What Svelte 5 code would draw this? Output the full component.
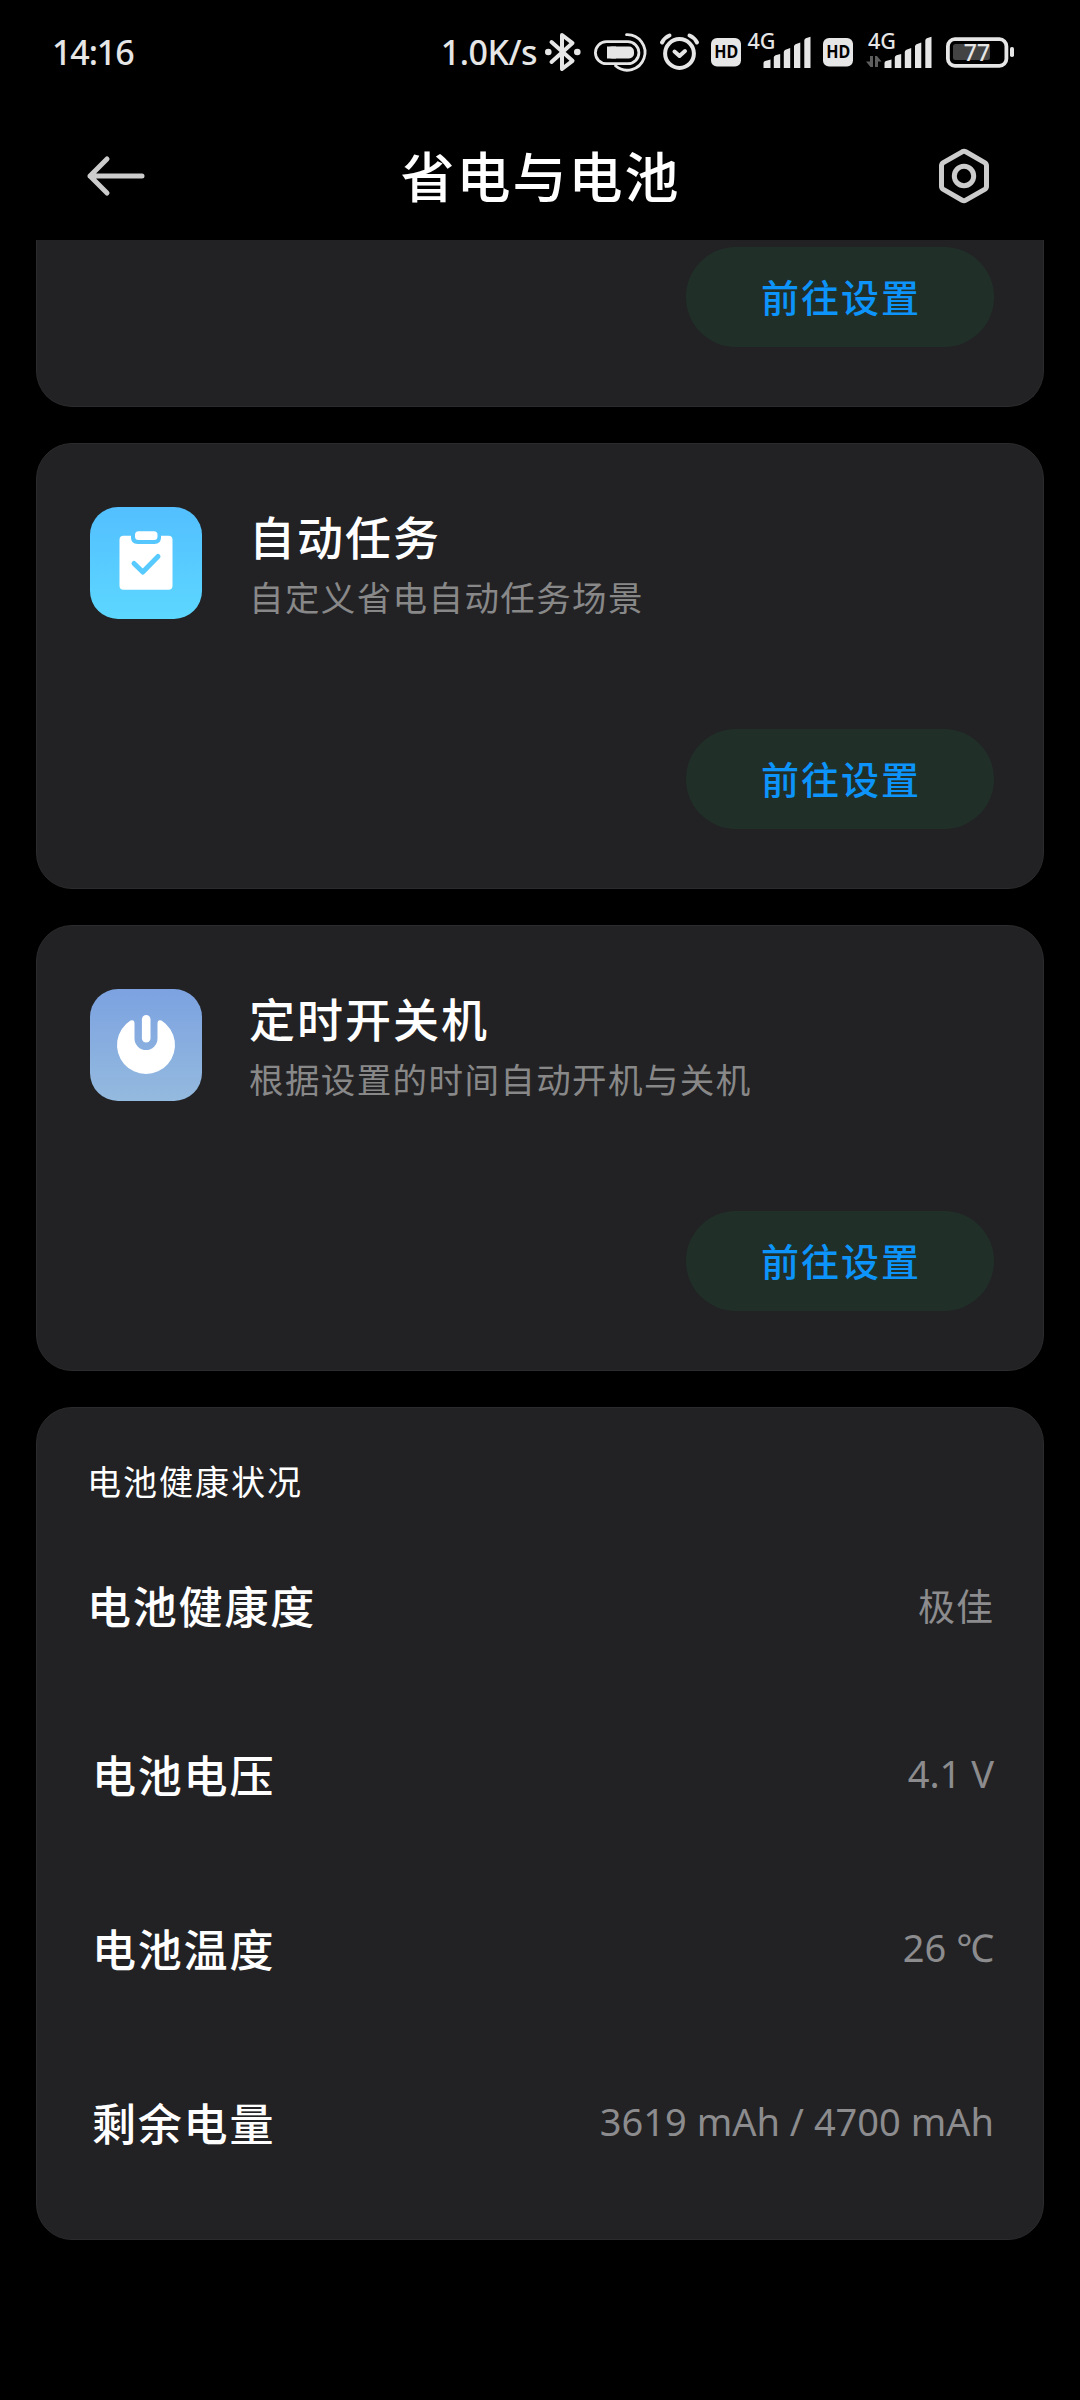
<script lang="ts">
	type Feature = {
		key: "task" | "power";
		title: string;
		note: string;
	};

	type Stat = {
		label: string;
		value: string;
	};

	const time = "14:16";
	const netSpeed = "1.0K/s";
	const batteryLevel = 77;
	const actionLabel = "前往设置";

	const features: Feature[] = [
		{ key: "task", title: "自动任务", note: "自定义省电自动任务场景" },
		{ key: "power", title: "定时开关机", note: "根据设置的时间自动开机与关机" },
	];

	const health: Stat = { label: "电池健康度", value: "极佳" };

	const stats: Stat[] = [
		{ label: "电池电压", value: "4.1 V" },
		{ label: "电池温度", value: "26 ℃" },
		{ label: "剩余电量", value: "3619 mAh / 4700 mAh" },
	];
</script>

{#snippet hdIcon()}
	<svg width="30" height="40" viewBox="0 0 30 40">
		<rect x="0" y="6" width="30" height="28.5" rx="6" fill="currentColor" />
		<text x="3.2" y="26.2" class="hd-text" textLength="24" lengthAdjust="spacingAndGlyphs">HD</text>
	</svg>
{/snippet}

{#snippet signalBars()}
	<path d="M0 36V31Q0 29.5 1.5 29L7 27.5V36ZM10.3 36V25.5Q10.3 24 12 23.3L16.7 22V36ZM20.3 36V20Q20.3 18.5 22 17.7L26.7 16V36ZM30.5 36V14.5Q30.5 13 32 12.2L36.8 10.5V36ZM40.8 36V8.5Q40.8 7 42.3 6.2L47 4.8V36Z" fill="currentColor" />
{/snippet}

{#snippet featureIcon(key: string)}
	{#if key === "task"}
		<svg viewBox="0 0 112 112">
			<path d="M33.5 28.7H41V30.5Q41 37 47.5 37H64.5Q71 37 71 30.5V28.7H78.5Q82.5 28.7 82.5 32.7V78.7Q82.5 82.7 78.5 82.7H33.5Q29.5 82.7 29.5 78.7V32.7Q29.5 28.7 33.5 28.7Z" fill="#fff" />
			<rect x="45" y="24.3" width="22.5" height="8.7" rx="3.5" fill="#fff" />
			<path d="M44 56.5L52.8 65L68 49.5" class="check" />
		</svg>
	{:else}
		<svg viewBox="0 0 112 112">
			<path d="M44.5 34.5V49.5A11.5 11.5 0 0 0 67.5 49.5V34.5Q67.5 30 71.5 31.5A29 29 0 1 1 40.5 31.5Q44.5 30 44.5 34.5Z" fill="#fff" />
			<rect x="51.9" y="26" width="8.6" height="27.5" rx="4.3" fill="#fff" />
		</svg>
	{/if}
{/snippet}

<div class="screen">
	<div class="status-bar">
		<span class="clock">{time}</span>
		<span class="speed">{netSpeed}</span>

		<svg class="bluetooth" width="36" height="40" viewBox="0 0 36 40">
			<path d="M6.5 10L27.5 28.8L17 37V3L27.5 11L6.5 30" class="line" />
			<circle cx="3.3" cy="20" r="3.3" fill="currentColor" />
			<circle cx="32.3" cy="20" r="3.3" fill="currentColor" />
		</svg>

		<svg class="toggle" width="53" height="40" viewBox="0 0 53 40">
			<rect x="1.4" y="9.7" width="43.5" height="22" rx="11" class="line line--thin" />
			<rect x="13" y="14.5" width="27" height="12" rx="5" fill="currentColor" />
			<path d="M13 14.5H22V26.5H13Z" fill="currentColor" />
			<path d="M32.5 2.6A17.8 17.8 0 1 1 21.5 33.8" class="line line--thin" />
		</svg>

		<svg class="alarm" width="39" height="40" viewBox="0 0 39 40">
			<circle cx="19.5" cy="21.5" r="14.4" class="line" />
			<path d="M14.5 19.5L19.5 24L25 19" class="line" />
			<path d="M2 10.5Q4.5 5.5 9.5 3.5M29.5 3.5Q34.5 5.5 37 10.5" class="line" />
		</svg>

		<span class="hd hd--first">{@render hdIcon()}</span>

		<svg class="signal signal--first" width="63" height="40" viewBox="0 0 63 40">
			<text x="-0.5" y="17" class="net-text" textLength="28" lengthAdjust="spacingAndGlyphs">4G</text>
			<g transform="translate(15.5 0)">{@render signalBars()}</g>
		</svg>

		<span class="hd">{@render hdIcon()}</span>

		<svg class="signal" width="66" height="40" viewBox="0 0 66 40">
			<text x="2" y="17" class="net-text" textLength="28" lengthAdjust="spacingAndGlyphs">4G</text>
			<path d="M4 24H7V35H4.5L0 29.5H4ZM9 24H11L15.5 29.5H12V35H9Z" fill="#5e5e5e" />
			<g transform="translate(18.5 0)">{@render signalBars()}</g>
		</svg>

		<svg class="battery" width="68" height="40" viewBox="0 0 68 40">
			<rect x="1.9" y="7.2" width="58.5" height="26.6" rx="7" class="battery-shell" />
			<rect x="7" y="12" width={(48 * batteryLevel) / 100} height="16" rx="2.5" fill="#434343" />
			<rect x="64" y="15" width="4" height="10" rx="1.8" fill="currentColor" />
			<text x="31" y="29" class="battery-text" text-anchor="middle">{batteryLevel}</text>
		</svg>
	</div>

	<header class="header">
		<button class="icon-button" type="button" aria-label="返回">
			<svg width="58" height="42" viewBox="0 0 58 42">
				<path d="M20 4L3 21L20 38M3 21H55" class="header-line" />
			</svg>
		</button>
		<h1>省电与电池</h1>
		<button class="icon-button" type="button" aria-label="设置">
			<svg width="50" height="56" viewBox="0 0 50 56">
				<path d="M23.2 3.8Q25 2.8 26.8 3.8L45.7 14.7Q47.5 15.8 47.5 17.8V38.2Q47.5 40.2 45.7 41.3L26.8 52.2Q25 53.2 23.2 52.2L4.3 41.3Q2.5 40.2 2.5 38.2V17.8Q2.5 15.8 4.3 14.7Z" class="header-line" />
				<circle cx="25" cy="28" r="9.7" class="header-line" />
			</svg>
		</button>
	</header>

	<main class="content">
		<section class="card card--clipped">
			<button class="action" type="button">{actionLabel}</button>
		</section>

		{#each features as feature (feature.key)}
			<section class="card card--feature">
				<div class="feature">
					<span class="feature-icon feature-icon--{feature.key}">
						{@render featureIcon(feature.key)}
					</span>
					<div class="feature-body">
						<h2>{feature.title}</h2>
						<p>{feature.note}</p>
					</div>
				</div>
				<button class="action" type="button">{actionLabel}</button>
			</section>
		{/each}

		<section class="card card--health">
			<p class="section-title">电池健康状况</p>
			<div class="row row--summary">
				<span class="row-label">{health.label}</span>
				<span class="row-value">{health.value}</span>
			</div>
			{#each stats as stat}
				<div class="row">
					<span class="row-label">{stat.label}</span>
					<span class="row-value row-value--number">{stat.value}</span>
				</div>
			{/each}
		</section>
	</main>
</div>

<style>
	:global(body) {
		background: #000;
	}

	.screen {
		box-sizing: border-box;
		width: 1080px;
		height: 2400px;
		overflow: hidden;
		background: #000;
		color: #fff;
		font-family: "Noto Sans", "Noto Sans CJK SC", sans-serif;
	}

	h1,
	h2,
	p {
		margin: 0;
	}

	button {
		padding: 0;
		border: 0;
		background: none;
		color: inherit;
		font: inherit;
	}

	svg {
		display: block;
		overflow: visible;
	}

	.status-bar {
		display: flex;
		align-items: center;
		box-sizing: border-box;
		height: 104px;
		padding: 0 66px 0 52px;
		color: #e6e6e6;
		font-size: 34px;
		font-weight: 500;
		line-height: 40px;
	}

	.clock {
		letter-spacing: -1.1px;
	}

	.speed {
		margin-left: auto;
		letter-spacing: -0.5px;
	}

	.line {
		fill: none;
		stroke: currentColor;
		stroke-width: 4;
		stroke-linecap: round;
		stroke-linejoin: round;
	}

	.line--thin {
		stroke-width: 2.8;
	}

	.bluetooth {
		margin-left: 8px;
	}

	.toggle,
	.alarm,
	.hd--first {
		margin-left: 13px;
	}

	.hd {
		margin-left: 12px;
	}

	.signal {
		margin-left: 13px;
	}

	.signal--first {
		margin-left: 7px;
	}

	.battery {
		margin-left: 14px;
	}

	.hd-text {
		fill: #000;
		font-size: 17px;
		font-weight: 700;
	}

	.net-text {
		fill: currentColor;
		font-size: 21px;
		font-weight: 500;
	}

	.battery-shell {
		fill: none;
		stroke: currentColor;
		stroke-width: 3.8;
	}

	.battery-text {
		fill: currentColor;
		font-size: 23px;
		font-weight: 500;
	}

	.header {
		display: flex;
		align-items: center;
		justify-content: space-between;
		box-sizing: border-box;
		height: 136px;
		padding: 8px 91px 0 87px;
	}

	.header h1 {
		padding: 2px 3px 0 0;
		font-size: 54px;
		font-weight: 500;
		line-height: 72px;
		letter-spacing: 2px;
	}

	.header-line {
		fill: none;
		stroke: #ccc;
		stroke-width: 5;
		stroke-linecap: round;
		stroke-linejoin: round;
	}

	.content {
		display: flex;
		flex-direction: column;
		gap: 36px;
		padding: 0 36px;
	}

	.card {
		display: flex;
		flex-direction: column;
		box-sizing: border-box;
		border: 1px solid #2b2b2d;
		border-radius: 36px;
		background: #222224;
	}

	.card--clipped {
		height: 167px;
		padding: 7px 49px 59px;
		border-top: 0;
		border-radius: 0 0 36px 36px;
	}

	.card--feature {
		justify-content: space-between;
		height: 446px;
		padding: 63px 49px 59px 53px;
	}

	.card--health {
		height: 833px;
		padding: 49px 49px 0 50px;
	}

	.feature {
		display: flex;
		gap: 47px;
	}

	.feature-icon {
		width: 112px;
		height: 112px;
		border-radius: 28px;
	}

	.feature-icon--task {
		background: linear-gradient(#53bfff, #5cd7ff);
		color: #57caff;
	}

	.feature-icon--power {
		background: linear-gradient(#7ca2e1, #94badf);
	}

	.check {
		fill: none;
		stroke: currentColor;
		stroke-width: 5;
		stroke-linecap: round;
		stroke-linejoin: round;
	}

	.feature-body h2 {
		font-size: 46px;
		font-weight: 500;
		line-height: 60px;
		letter-spacing: 2px;
	}

	.feature-body p {
		color: #888889;
		font-size: 34.5px;
		line-height: 62px;
		letter-spacing: 1.4px;
	}

	.action {
		align-self: flex-end;
		flex: none;
		width: 308px;
		height: 100px;
		padding: 0 0 3px 2px;
		border-radius: 50px;
		background: #203029;
		color: #0d94fa;
		font-size: 38px;
		font-weight: 500;
		letter-spacing: 2px;
	}

	.section-title {
		font-size: 34px;
		line-height: 50px;
		letter-spacing: 2px;
	}

	.row {
		display: flex;
		align-items: center;
		justify-content: space-between;
		height: 174px;
		padding-left: 5px;
	}

	.row--summary {
		box-sizing: border-box;
		height: 180px;
		padding: 16px 0 0;
	}

	.row-label {
		font-size: 44px;
		font-weight: 500;
		letter-spacing: 1.8px;
	}

	.row-value {
		color: #8c8c8e;
		font-size: 37px;
		letter-spacing: 1px;
	}

	.row-value--number {
		padding-bottom: 3px;
		font-size: 38px;
		letter-spacing: 0;
	}
</style>
